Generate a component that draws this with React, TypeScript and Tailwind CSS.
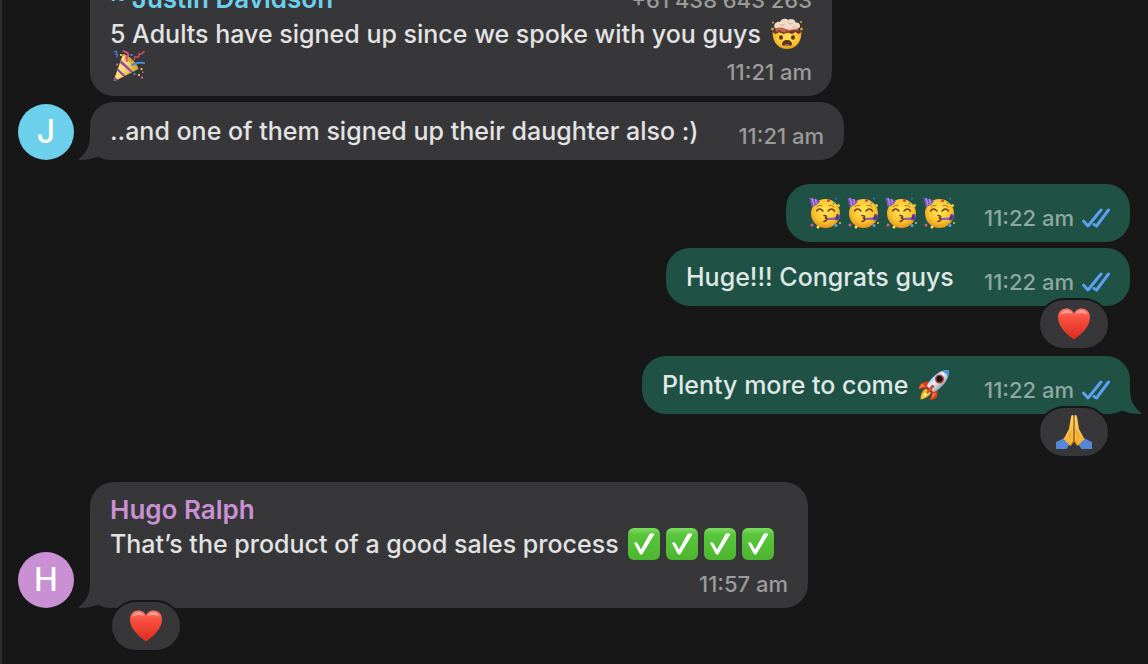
import type { ReactNode } from "react";
import clsx from "clsx";

function Emoji({ label, children, inline = true }: { label: string; children: ReactNode; inline?: boolean }) {
  return (
    <svg
      role="img"
      aria-label={label}
      viewBox="0 0 64 64"
      className={clsx("w-8 h-8 overflow-visible", inline ? "inline-block mx-[3px] align-[-7px]" : "block")}
    >
      {children}
    </svg>
  );
}

// Gradients shared by all emoji drawings
function EmojiDefs() {
  return (
    <svg className="absolute w-0 h-0" aria-hidden="true">
      <defs>
        <radialGradient id="face" cx="0.5" cy="0.4" r="0.6">
          <stop offset="0" stopColor="#ffe45c" />
          <stop offset="0.65" stopColor="#fcc62f" />
          <stop offset="1" stopColor="#e8921c" />
        </radialGradient>
        <linearGradient id="heart" x1="0" y1="0" x2="0" y2="1">
          <stop offset="0" stopColor="#ff7a6b" />
          <stop offset="0.3" stopColor="#f8503f" />
          <stop offset="1" stopColor="#dd2c20" />
        </linearGradient>
        <linearGradient id="check" x1="0" y1="0" x2="0" y2="1">
          <stop offset="0" stopColor="#7fdc62" />
          <stop offset="0.2" stopColor="#58c63c" />
          <stop offset="1" stopColor="#4db52f" />
        </linearGradient>
        <linearGradient id="cone" x1="0" y1="0" x2="1" y2="0.6">
          <stop offset="0" stopColor="#f2cc4a" />
          <stop offset="0.5" stopColor="#fbe27a" />
          <stop offset="1" stopColor="#cf9a25" />
        </linearGradient>
        <linearGradient id="hull" x1="0" y1="0" x2="1" y2="1">
          <stop offset="0.2" stopColor="#6fb0ee" />
          <stop offset="0.45" stopColor="#eef3fa" />
          <stop offset="0.8" stopColor="#7f8a9c" />
        </linearGradient>
        <linearGradient id="hand" x1="0" y1="0" x2="0" y2="1">
          <stop offset="0" stopColor="#ffd667" />
          <stop offset="1" stopColor="#f5ac2c" />
        </linearGradient>
      </defs>
    </svg>
  );
}

function ExplodingHead() {
  return (
    <Emoji label="Exploding head">
      <path d="M3 28C3 50 16 62 32 62S61 50 61 28C52 22 12 22 3 28Z" fill="url(#face)" />
      <path d="M3 28C8 21 56 21 61 28L55 32L49 28L42 32L34 29L25 32L17 28L9 32Z" fill="#6d3325" />
      <path d="M7 19C4 11 13 6 18 8C21 0 31 0 34 4C40 0 49 3 49 9C57 8 61 16 56 20C52 25 12 26 7 19Z" fill="#f3dcc6" />
      <path d="M8 21Q19 17 30 22T56 20L54 26Q45 23 36 27T20 27L10 27Z" fill="#b9674d" />
      <path d="M17 13Q22 17 27 12M33 9Q37 14 43 11M43 18Q48 20 51 16" fill="none" stroke="#d6ab8c" strokeWidth="2" />
      <path d="M15 25L20 29M30 25L35 29M45 25L41 30" stroke="#8f2f26" strokeWidth="3" />
      <circle cx="4" cy="9" r="2" fill="#e7ae36" />
      <circle cx="60" cy="8" r="2" fill="#e7ae36" />
      <circle cx="3" cy="22" r="3" fill="#d89b2c" />
      <circle cx="61" cy="22" r="3" fill="#d89b2c" />
      <ellipse cx="20" cy="39" rx="4" ry="4.5" fill="#5b3416" />
      <ellipse cx="44" cy="39" rx="4" ry="4.5" fill="#5b3416" />
      <path d="M22 54C22 46 27 44 32 44S42 46 42 54C38 57 26 57 22 54Z" fill="#603018" />
      <path d="M26 54Q32 50 38 54L37 56H27Z" fill="#9c7459" />
    </Emoji>
  );
}

function PartyPopper() {
  return (
    <Emoji label="Party popper">
      <path d="M20 8C29 13 42 25 51 38L4 62Q0 63 2 59Z" fill="url(#cone)" />
      <path d="M16 20L40 43L36 45L14 26ZM10 37L25 51L21 53L8 41Z" fill="#9a45a8" />
      <path d="M4 54L10 59L4 62Q0 63 2 59Z" fill="#9a45a8" />
      <path d="M20 8C32 10 48 26 51 38C42 34 26 20 20 8Z" fill="#d8a835" />
      <path d="M28 22C22 14 34 12 30 7C28 3 24 6 21 2" fill="none" stroke="#d94b78" strokeWidth="4" strokeLinecap="round" />
      <path d="M3 3Q10 1 6 8Q11 7 8 14" fill="none" stroke="#3c77d0" strokeWidth="3" strokeLinecap="round" />
      <path d="M43 19Q42 11 48 14Q53 16 52 8Q57 10 62 3" fill="none" stroke="#cc4e76" strokeWidth="3" strokeLinecap="round" />
      <path d="M38 30Q48 24 62 26" fill="none" stroke="#4789d9" strokeWidth="4" strokeLinecap="round" />
      <path d="M14 8h4v4h-4zM55 36h4v4h-4zM50 48h4v4h-4z" fill="#e9bd36" />
      <path d="M6 27h4v4H6zM56 53h4v4h-4zM58 43h3v3h-3z" fill="#da638b" />
      <path d="M41 46h4v4h-4zM35 8h4v4h-4z" fill="#4c83d8" />
    </Emoji>
  );
}

function PartyFace() {
  return (
    <Emoji label="Partying face">
      <circle cx="33" cy="33" r="29" fill="url(#face)" />
      <path d="M1 1L22 7Q18 17 5 20Z" fill="#7954bd" />
      <path d="M6 2L10 17M13 4L15 14" stroke="#b08ddd" strokeWidth="3" />
      <path d="M15 28Q21 20 28 28M38 28Q45 20 51 28" fill="none" stroke="#70401a" strokeWidth="3" strokeLinecap="round" />
      <path d="M16 19Q21 15 26 17M40 17Q46 15 50 20" fill="none" stroke="#b57620" strokeWidth="2" strokeLinecap="round" />
      <path d="M30 37Q39 38 33 42Q40 46 30 49" fill="none" stroke="#6e3514" strokeWidth="3" strokeLinecap="round" />
      <path d="M36 42L55 41Q52 33 58 34Q64 36 62 43Q60 49 53 46L36 46Z" fill="#68459f" />
      <path d="M37 44H52" stroke="#a783ca" strokeWidth="2" />
      <circle cx="56" cy="41" r="3" fill="#4d317f" />
      <circle cx="39" cy="7" r="3" fill="#d9432f" />
      <circle cx="54" cy="3" r="2" fill="#3b76d0" />
      <circle cx="59" cy="17" r="3" fill="#e6c640" />
      <circle cx="49" cy="13" r="2" fill="#45a1ba" />
      <circle cx="6" cy="56" r="3" fill="#dc6176" />
      <circle cx="18" cy="60" r="3" fill="#ffe24a" />
      <circle cx="54" cy="57" r="3" fill="#58a5de" />
      <circle cx="62" cy="52" r="2" fill="#e4c53f" />
    </Emoji>
  );
}

function Rocket() {
  return (
    <Emoji label="Rocket">
      <path d="M23 24L7 28Q2 32 1 40L17 38ZM40 42L38 56Q33 62 24 62L28 47Z" fill="#dc3822" />
      <path d="M8 29L2 39L14 34ZM37 48L27 61L30 49Z" fill="#f28134" />
      <path d="M16 39C8 43 5 51 5 61C14 60 23 55 26 47Z" fill="#f7a72d" />
      <path d="M17 43Q10 49 8 58Q18 54 23 48Z" fill="#fff06b" />
      <path d="M62 2C44 1 25 16 16 37L28 48C47 40 63 22 62 2Z" fill="url(#hull)" />
      <path d="M18 34L31 46L28 49L15 38Z" fill="#a83b26" />
      <path d="M62 2Q54 1 48 4Q56 8 60 16Q63 9 62 2Z" fill="#4f8fdd" />
      <circle cx="43" cy="20" r="9" fill="#ba3c2b" />
      <circle cx="43" cy="20" r="6" fill="#10151e" />
      <path d="M28 31Q31 32 33 35L19 50L16 47Z" fill="#df4a2d" />
    </Emoji>
  );
}

function CheckMark() {
  return (
    <Emoji label="Check mark">
      <rect width="64" height="64" rx="12" fill="url(#check)" />
      <path d="M12 30Q17 26 20 32L26 43L43 12Q47 9 53 12L29 52Q26 55 23 51Z" fill="#fff" />
    </Emoji>
  );
}

function Heart() {
  return (
    <Emoji label="Red heart" inline={false}>
      <path d="M32 63C22 56 0 39 0 19C0 7 8 1 17 1C25 1 30 6 32 11C34 6 39 1 47 1C56 1 64 7 64 19C64 39 42 56 32 63Z" fill="url(#heart)" />
      <path d="M5 13Q10 4 19 5Q26 6 28 12Q16 7 5 13ZM36 12Q38 6 45 5Q54 4 59 13Q48 7 36 12Z" fill="#ffc0b7" opacity="0.75" />
    </Emoji>
  );
}

function FoldedHands() {
  return (
    <Emoji label="Folded hands" inline={false}>
      <path d="M-4 52Q4 49 12 44L25 54L17 66H-4ZM68 52Q60 49 52 44L39 54L47 66H68Z" fill="#5687d6" />
      <path d="M11 46L25 60L31 52V-1Q27-4 26 2L22 26L15 39ZM53 46L39 60L33 52V-1Q37-4 38 2L42 26L49 39Z" fill="url(#hand)" />
      <path d="M32 0V48L26 58M32 48L38 58" fill="none" stroke="#c47b19" strokeWidth="2" />
      <path d="M27 29Q22 37 23 44M37 29Q42 37 41 44" fill="none" stroke="#e09c31" strokeWidth="2" />
    </Emoji>
  );
}

function ReadTicks() {
  return (
    <svg role="img" aria-label="Read" viewBox="0 0 28 20" className="w-7 h-5" fill="none" stroke="#5aa1f2" strokeWidth="3" strokeLinecap="round" strokeLinejoin="round">
      <path d="M1.5 13L6 18L19 2" />
      <path d="M12 16.500L14.500 18L26.500 2" />
    </svg>
  );
}

function Tail({ mine }: { mine?: boolean }) {
  return (
    <svg
      aria-hidden="true"
      viewBox="0 0 34 24"
      className={clsx("absolute bottom-0 w-[34px] h-6", mine ? "-right-3 -scale-x-100 text-[#205145]" : "-left-3 text-[#373739]")}
    >
      <path d="M12 0C12 9 9 16 1 23Q0 24 2 24C9 24 14 23 20 20.500C24 23 28 24 34 24V0Z" fill="currentColor" />
    </svg>
  );
}

type MessageProps = {
  children: ReactNode;
  time: string;
  className?: string;
  mine?: boolean;
  tail?: boolean;
  reaction?: ReactNode;
};

function Reaction({ children, mine }: { children: ReactNode; mine?: boolean }) {
  return (
    <button
      type="button"
      className={clsx(
        "absolute -bottom-[42px] w-[68px] h-12 rounded-full bg-[#373739] ring-2 ring-[#171717] flex items-center justify-center",
        mine ? "right-[22px]" : "left-[22px]"
      )}
    >
      {children}
    </button>
  );
}

// Single line: the time sits beside the text
function ShortMessage({ children, time, className, mine, tail, reaction }: MessageProps) {
  return (
    <div
      className={clsx(
        "relative rounded-3xl px-5 py-3 flex items-end justify-between gap-6",
        mine ? "bg-[#205145] text-[#dfe8e5]" : "bg-[#373739] text-[#e3e3e4]",
        className
      )}
    >
      {tail && <Tail mine={mine} />}
      <p className="relative text-[25px] leading-[34px]">{children}</p>
      <div className={clsx("relative flex items-center gap-2 text-[22px] leading-6", mine ? "text-[#8fa8a1]" : "text-[#9b9b9c]")}>
        <time>{time}</time>
        {mine && <ReadTicks />}
      </div>
      {reaction && <Reaction mine={mine}>{reaction}</Reaction>}
    </div>
  );
}

function Avatar({ letter, className }: { letter: string; className: string }) {
  return (
    <div className={clsx("w-14 h-14 shrink-0 rounded-full flex items-center justify-center text-white text-[32px]", className)}>
      {letter}
    </div>
  );
}

export default function App() {
  return (
    <main className="h-screen overflow-hidden flex flex-col justify-end bg-[#171717] border-l-2 border-[#2c2c2d] pl-4 pr-[18px] pb-14 font-['Inter',sans-serif] font-medium">
      <EmojiDefs />

      {/* Justin */}
      <div className="flex flex-col gap-1.5 mb-6">
        <div className="ml-[72px] w-[742px] rounded-3xl bg-[#373739] px-5 pt-2.5 pb-3">
          <div className="flex items-baseline justify-between leading-9">
            <span className="text-[26px] font-semibold text-[#6cd0ec]">~{"\u2009"}Justin Davidson</span>
            <span className="text-[22px] text-[#9b9b9c]">+61 438 643 263</span>
          </div>
          <div className="grid">
            <p className="col-start-1 row-start-1 pb-0.5 text-[25px] leading-8 text-[#e3e3e4]">
              5 Adults have signed up since we spoke with you guys <ExplodingHead /> <PartyPopper />
            </p>
            <time className="col-start-1 row-start-1 self-end justify-self-end text-[22px] leading-6 text-[#9b9b9c]">11:21 am</time>
          </div>
        </div>
        <div className="flex items-end gap-4">
          <Avatar letter="J" className="bg-[#6cd0ec]" />
          <ShortMessage time="11:21 am" className="min-w-[754px]" tail>..and one of them signed up their daughter also :)</ShortMessage>
        </div>
      </div>

      {/* Own replies */}
      <div className="flex flex-col items-end mb-[68px]">
        <ShortMessage time="11:22 am" className="min-w-[344px]" mine>
          <PartyFace /><PartyFace /><PartyFace /><PartyFace />
        </ShortMessage>
        <div className="mt-1.5 mb-[50px]">
          <ShortMessage time="11:22 am" className="min-w-[464px]" mine reaction={<Heart />}>Huge!!! Congrats guys</ShortMessage>
        </div>
        <ShortMessage time="11:22 am" className="min-w-[488px]" mine tail reaction={<FoldedHands />}>
          Plenty more to come <Rocket />
        </ShortMessage>
      </div>

      {/* Hugo */}
      <div className="flex items-end gap-4">
        <Avatar letter="H" className="bg-[#c990d4]" />
        <div className="relative min-w-[718px] rounded-3xl bg-[#373739] px-5 pt-2.5 pb-3">
          <Tail />
          <div className="relative text-[26px] leading-9 font-semibold text-[#c990d4]">Hugo Ralph</div>
          <p className="relative text-[25px] leading-8 text-[#e3e3e4]">
            That’s the product of a good sales process <CheckMark /><CheckMark /><CheckMark /><CheckMark />
          </p>
          <div className="mt-3 text-right text-[22px] leading-6 text-[#9b9b9c]">
            <time>11:57 am</time>
          </div>
          <Reaction><Heart /></Reaction>
        </div>
      </div>
    </main>
  );
}
